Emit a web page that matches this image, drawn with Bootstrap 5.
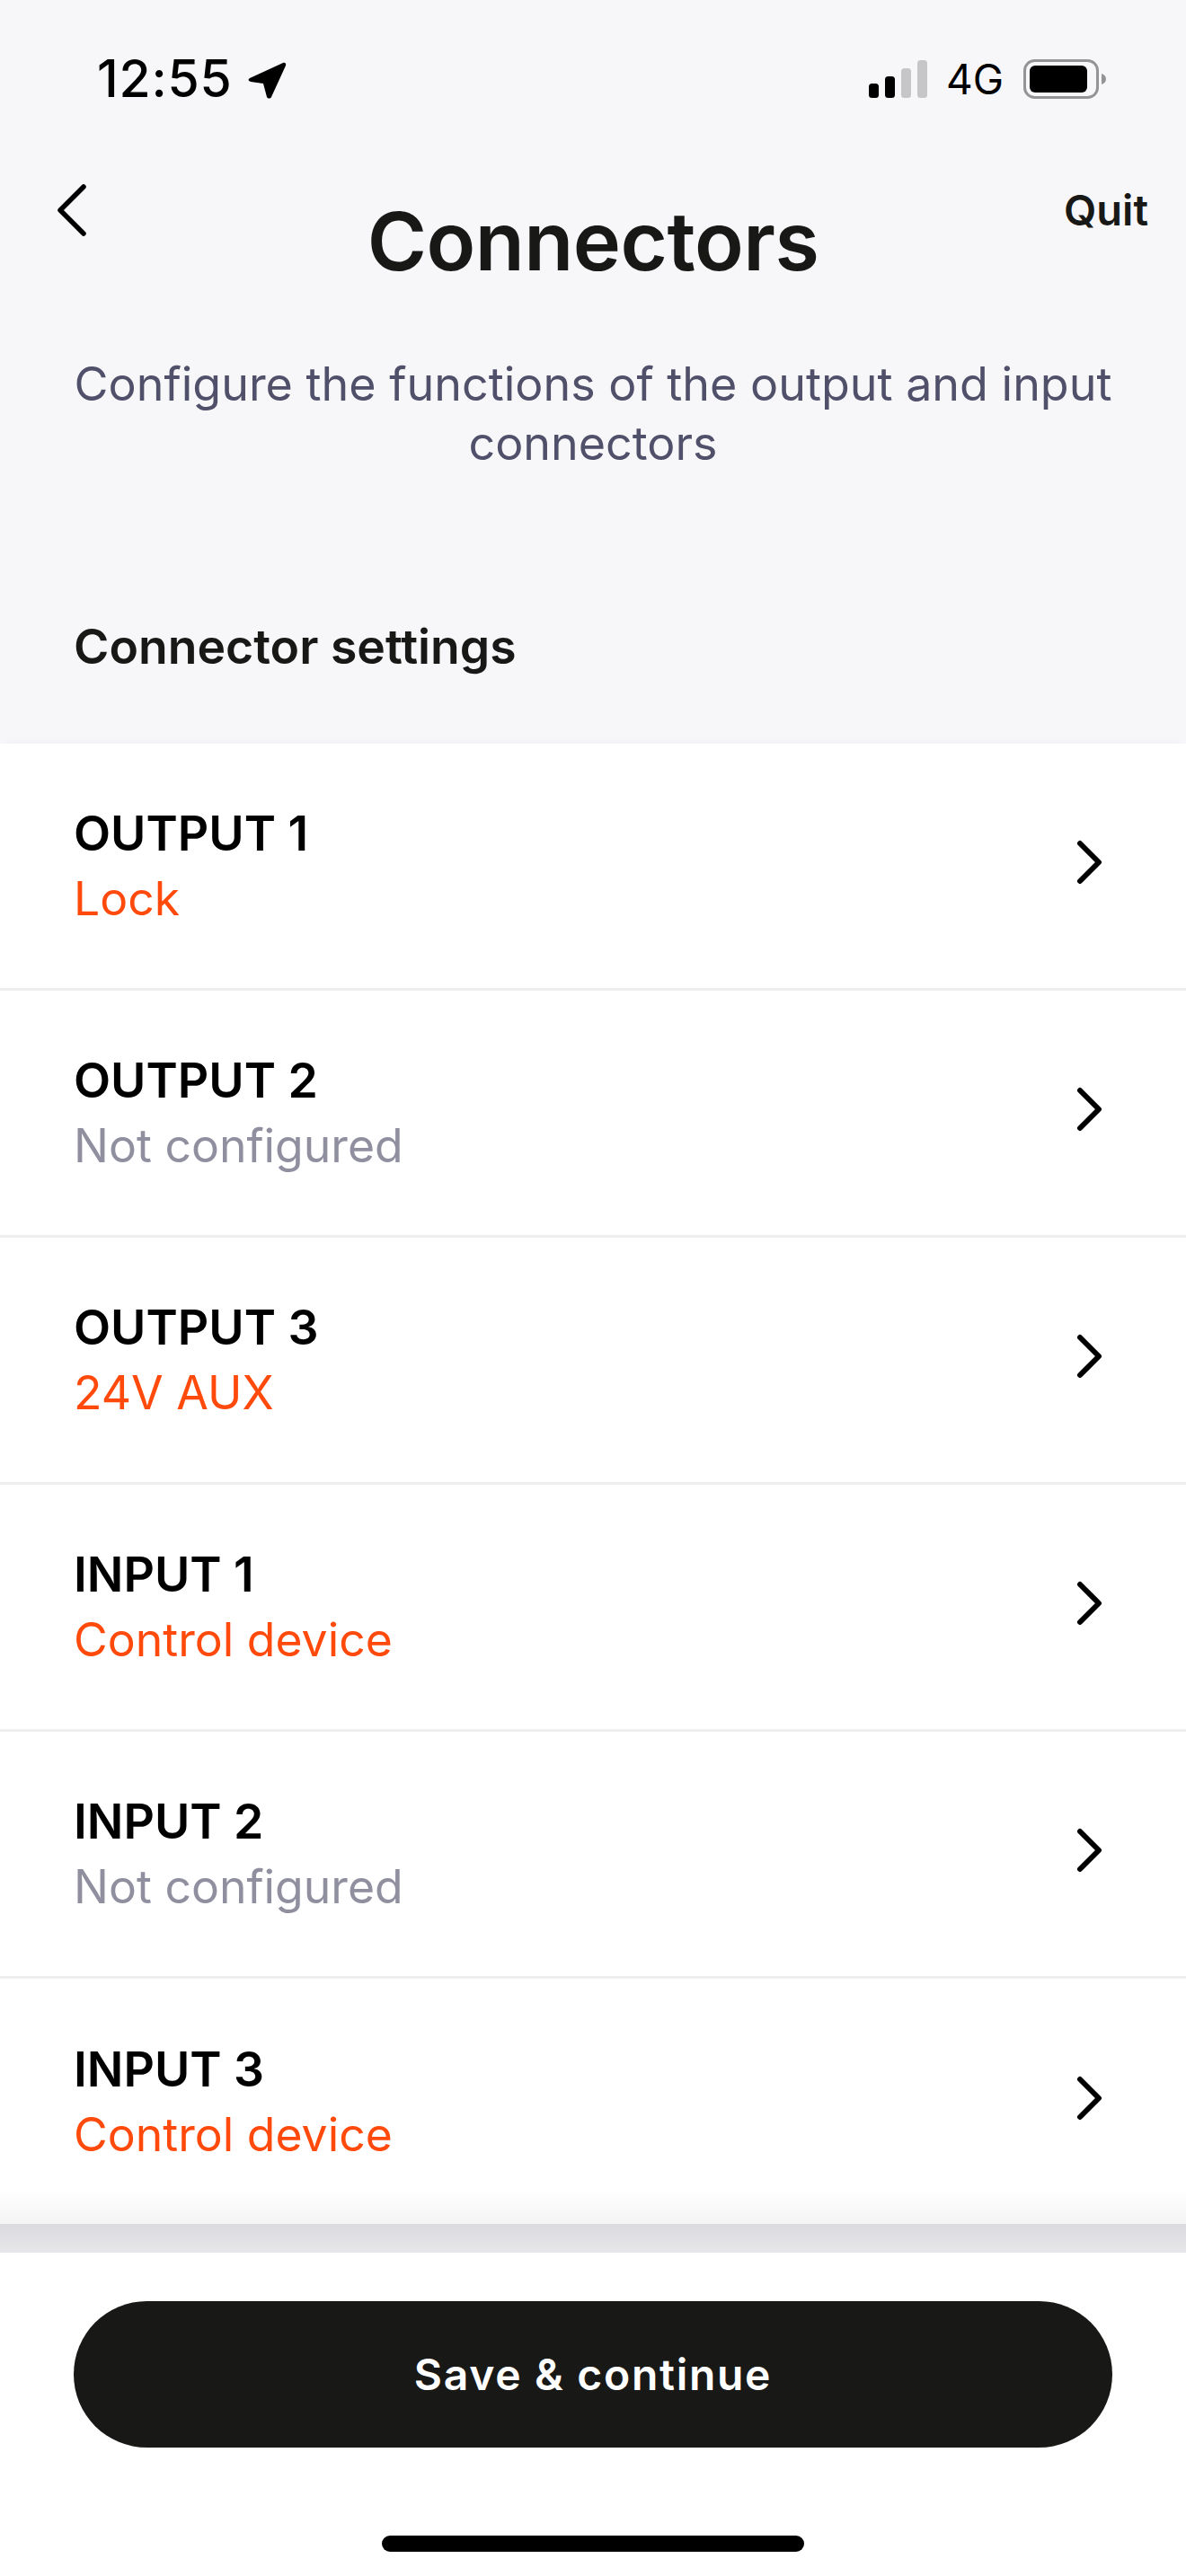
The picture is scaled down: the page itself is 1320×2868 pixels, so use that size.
<!doctype html>
<html lang="en">
  <head>
    <meta charset="utf-8">
    <meta name="viewport" content="width=device-width, initial-scale=1">
    <title>Connectors</title>
    <link href="https://cdn.jsdelivr.net/npm/bootstrap@5.3.5/dist/css/bootstrap.min.css" rel="stylesheet">
    <style>
      body {
        background: #f7f7fa;
        font-family: Inter, "Liberation Sans", sans-serif;
        color: #181816;
      }
      .screen { height: 2868px; overflow: hidden; }
      .status-row { height: 152px; padding: 50px 89px 0 108px; }
      .clock { font-size: 57px; font-weight: 500; line-height: 76px; color: #000; letter-spacing: .8px; }
      .net { font-size: 46px; line-height: 76px; color: #000; margin: 0 22px 0 20px; }
      .top-row { grid-template-columns: 1fr auto 1fr; padding: 0 42px; }
      .back-icon { margin: 52px 0 0 20px; }
      .quit { font-size: 47px; font-weight: 600; margin-top: 55px; line-height: 54px; text-align: right; color: #181816; }
      .page-title { font-size: 90px; font-weight: 600; line-height: 104px; margin: 65px 0 0; letter-spacing: -.5px; }
      .intro { font-size: 52px; line-height: 66px; color: #50506a; text-align: center; padding: 0 60px; margin: 74px 0 0; }
      .section-title { font-size: 53.5px; font-weight: 600; line-height: 60px; padding: 0 82px; margin: 163px 0 0; height: 138px; }
      .rows { box-shadow: 0 -6px 10px -6px rgba(0,0,0,.04); }
      .rows .list-group-item { height: 275px; padding: 0 92px 0 82px; border-color: #eeeef1; border-width: 0 0 3px; background: transparent; }
      .rows .list-group-item:last-child { height: 273px; background: linear-gradient(#fff 235px, #f4f4f5); }
      .row-name { font-size: 53.5px; font-weight: 600; line-height: 72px; color: #000; }
      .row-value { font-size: 51.7px; line-height: 72px; }
      .is-set { color: #ff4a0c; }
      .not-set { color: #8f8f9f; }
      .go-icon { margin-bottom: 8px; }
      .strip { height: 32px; background: linear-gradient(#dbdbdf, #e7e7ea); }
      .bottom { background: #fff; flex: 1; padding: 54px 82px 0; }
      .save-btn { height: 163px; border-radius: 82px; background: #181816; border: 0; color: #fff; font-size: 48px; font-weight: 600; letter-spacing: 1.7px; width: 100%; }
      .home-bar { width: 470px; height: 18px; border-radius: 9px; background: #000; margin: 98px auto 0; }
    </style>
  </head>
  <body>
    <div class="screen d-flex flex-column">
      <div class="status-row d-flex align-items-start justify-content-between">
        <div class="d-flex align-items-center">
          <span class="clock">12:55</span>
          <svg class="ms-3" width="46" height="46" viewBox="0 0 46 46"><path d="M3 22 40 5c2-1 4 1 3 3L27 43c-1 2-4 2-5 0l-4-15-14-2c-3-1-3-3-1-4Z" fill="#000"/></svg>
        </div>
        <div class="d-flex align-items-center">
          <svg width="66" height="44" viewBox="0 0 66 44">
            <rect x="0" y="27" width="11" height="16" rx="3.5" fill="#000"/>
            <rect x="18" y="19" width="11" height="24" rx="3.5" fill="#000"/>
            <rect x="36" y="10" width="11" height="33" rx="3.5" fill="#c6c6c8"/>
            <rect x="54" y="1" width="11" height="42" rx="3.5" fill="#c6c6c8"/>
          </svg>
          <span class="net">4G</span>
          <svg width="92" height="44" viewBox="0 0 92 44">
            <rect x="1.5" y="1.5" width="81" height="41" rx="11" fill="none" stroke="#949496" stroke-width="3"/>
            <rect x="7" y="7" width="64" height="30" rx="6" fill="#000"/>
            <path d="M87 16c3 1 5 3 5 6s-2 5-5 6Z" fill="#949496"/>
          </svg>
        </div>
      </div>

      <div class="top-row d-grid align-items-start">
        <svg class="back-icon" width="34" height="60" viewBox="0 0 34 60"><path d="M31 4 5 30l26 26" fill="none" stroke="#000" stroke-width="5.5" stroke-linecap="round" stroke-linejoin="round"/></svg>
        <h1 class="page-title">Connectors</h1>
        <div class="quit">Quit</div>
      </div>
      <p class="intro">Configure the functions of the output and input connectors</p>
      <h2 class="section-title">Connector settings</h2>

      <div class="rows list-group list-group-flush bg-white rounded-0">
        <div class="list-group-item d-flex align-items-center justify-content-between">
          <div><div class="row-name">OUTPUT 1</div><div class="row-value is-set">Lock</div></div>
          <svg class="go-icon" width="30" height="50" viewBox="0 0 30 50"><path d="M4 4 25 25 4 46" fill="none" stroke="#000" stroke-width="6" stroke-linecap="round" stroke-linejoin="round"/></svg>
        </div>
        <div class="list-group-item d-flex align-items-center justify-content-between">
          <div><div class="row-name">OUTPUT 2</div><div class="row-value not-set">Not configured</div></div>
          <svg class="go-icon" width="30" height="50" viewBox="0 0 30 50"><path d="M4 4 25 25 4 46" fill="none" stroke="#000" stroke-width="6" stroke-linecap="round" stroke-linejoin="round"/></svg>
        </div>
        <div class="list-group-item d-flex align-items-center justify-content-between">
          <div><div class="row-name">OUTPUT 3</div><div class="row-value is-set">24V AUX</div></div>
          <svg class="go-icon" width="30" height="50" viewBox="0 0 30 50"><path d="M4 4 25 25 4 46" fill="none" stroke="#000" stroke-width="6" stroke-linecap="round" stroke-linejoin="round"/></svg>
        </div>
        <div class="list-group-item d-flex align-items-center justify-content-between">
          <div><div class="row-name">INPUT 1</div><div class="row-value is-set">Control device</div></div>
          <svg class="go-icon" width="30" height="50" viewBox="0 0 30 50"><path d="M4 4 25 25 4 46" fill="none" stroke="#000" stroke-width="6" stroke-linecap="round" stroke-linejoin="round"/></svg>
        </div>
        <div class="list-group-item d-flex align-items-center justify-content-between">
          <div><div class="row-name">INPUT 2</div><div class="row-value not-set">Not configured</div></div>
          <svg class="go-icon" width="30" height="50" viewBox="0 0 30 50"><path d="M4 4 25 25 4 46" fill="none" stroke="#000" stroke-width="6" stroke-linecap="round" stroke-linejoin="round"/></svg>
        </div>
        <div class="list-group-item d-flex align-items-center justify-content-between border-0">
          <div><div class="row-name">INPUT 3</div><div class="row-value is-set">Control device</div></div>
          <svg class="go-icon" width="30" height="50" viewBox="0 0 30 50"><path d="M4 4 25 25 4 46" fill="none" stroke="#000" stroke-width="6" stroke-linecap="round" stroke-linejoin="round"/></svg>
        </div>
      </div>
      <div class="strip"></div>

      <div class="bottom">
        <button class="btn save-btn">Save &amp; continue</button>
        <div class="home-bar"></div>
      </div>
    </div>
    <script src="https://cdn.jsdelivr.net/npm/bootstrap@5.3.5/dist/js/bootstrap.bundle.min.js"></script>
  </body>
</html>
